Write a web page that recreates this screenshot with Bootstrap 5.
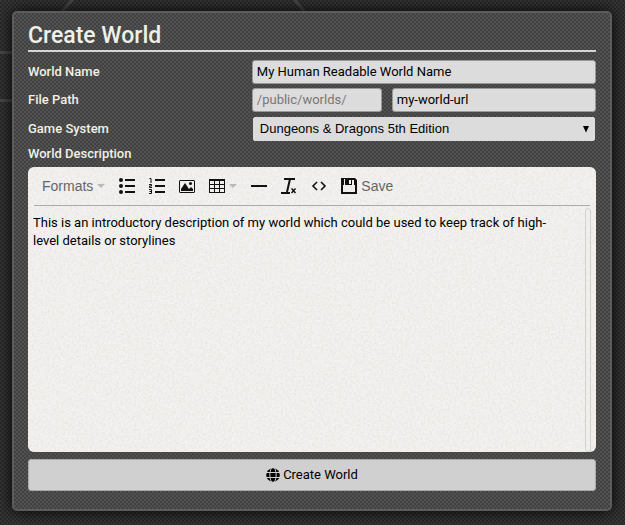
<!DOCTYPE html>
<html lang="en">
<head>
<meta charset="utf-8">
<meta name="viewport" content="width=device-width, initial-scale=1">
<title>Create World</title>
<link href="https://cdn.jsdelivr.net/npm/bootstrap@5.3.0/dist/css/bootstrap.min.css" rel="stylesheet">
<style>
  body {
    font-family: Roboto, "Open Sans", sans-serif;
    font-size: 13px;
    line-height: 18px;
    color: #000;
    background: #303030;
    padding: 11px 13px 14px 12px;
  }
  .weave {
    background-image: repeating-conic-gradient(rgba(0,0,0,.15) 0 25%, rgba(255,255,255,.03) 0 50%);
    background-size: 4px 4px;
  }
  .backdrop-lines { z-index: -1; }
  .panel {
    background-color: #4c4c4c;
    border: 2px solid #5c5c5c;
    border-radius: 5px;
    padding: 8px 14px 18px;
    box-shadow: 0 0 16px #000;
  }
  .panel-title {
    font-size: 23px;
    line-height: 29px;
    font-weight: 500;
    color: #f0f0e8;
    border-bottom: 2px solid #d4d4d2;
    margin-bottom: 8px;
  }
  .fields { display: grid; row-gap: 4px; }
  .field-label { color: #f0f0e8; font-weight: 500; }
  .field {
    height: 24px;
    padding: 0 4px 2px;
    font-size: 13px;
    color: #000;
    background-color: #dcdcdc;
    border: 1px solid #999;
    border-radius: 3px;
    min-width: 0;
  }
  .field:disabled { color: #777; opacity: 1; }
  .field-path { flex: 0 0 130px; }
  .system { margin: 1px 1px 0; }
  .field-select {
    appearance: none;
    font-family: "Liberation Sans", Arial, sans-serif;
    padding: 0 6px;
    border-color: #dcdcdc;
    border-radius: 2px;
  }
  .arrow { right: 5px; top: 9px; pointer-events: none; }
  .editor {
    height: 285px;
    background: #f3f2f0;
    border-radius: 6px;
    padding: 0 5px;
  }
  .tools {
    height: 39px;
    margin: 0 1px;
    padding: 0 8px;
    gap: 14px;
    border-bottom: 1px solid #aaa;
  }
  .tool {
    font: 14px/18px "Liberation Sans", Arial, sans-serif;
    color: #666;
    gap: 4px;
    padding: 0;
    border: 0;
    background: none;
  }
  .tool svg { display: block; color: #111; }
  .tool .caret { color: #b9b9b9; }
  .note {
    resize: none;
    border: 0;
    padding: 8px 20px 0 0;
    background: transparent;
    color: #000;
    outline-offset: -1px;
  }
  .track {
    width: 6px;
    margin-top: 2px;
    border: 1px solid #d2d1ce;
    border-radius: 3px;
  }
  .submit {
    height: 32px;
    margin-top: 7px;
    gap: 3px;
    font-size: 13px;
    color: #000;
    background-color: #d0d0d0;
    border: 1px solid #aaa;
    border-radius: 3px;
  }
</style>
<script src="https://cdn.jsdelivr.net/npm/bootstrap@5.3.0/dist/js/bootstrap.bundle.min.js"></script>
</head>
<body class="weave position-relative min-vh-100">
<svg class="backdrop-lines position-absolute top-0 start-0" width="400" height="110" fill="none" stroke="#484848" stroke-width="3" aria-hidden="true">
  <path d="M0 52.500H12M0 100.500H12M74 -2 62 12M292 -4 306 14"/>
</svg>
<form class="panel weave position-relative">
  <h1 class="panel-title">Create World</h1>
  <div class="fields">
    <div class="row g-0 align-items-center">
      <label class="field-label col" for="world-name">World Name</label>
      <div class="d-flex" style="width:60.6%"><input class="field w-100" id="world-name" type="text" value="My Human Readable World Name"></div>
    </div>
    <div class="row g-0 align-items-center">
      <label class="field-label col" for="file-path">File Path</label>
      <div class="d-flex" style="width:60.6%;gap:10px">
        <input class="field field-path" type="text" value="/public/worlds/" aria-label="Base path" disabled>
        <input class="field flex-grow-1" id="file-path" type="text" value="my-world-url">
      </div>
    </div>
    <div class="row g-0 align-items-center">
      <label class="field-label col" for="game-system">Game System</label>
      <div style="width:60.6%">
        <div class="system position-relative d-flex">
          <select class="field field-select w-100" id="game-system"><option>Dungeons &amp; Dragons 5th Edition</option></select>
          <svg class="arrow position-absolute" width="8" height="7" aria-hidden="true"><path d="M1 0h6L4 6.500z"/></svg>
        </div>
      </div>
    </div>
    <label class="field-label" for="description">World Description</label>
  </div>
  <div class="editor position-relative d-flex flex-column overflow-hidden mt-1">
    <svg class="position-absolute top-0 start-0 w-100 h-100" aria-hidden="true">
      <filter id="paper"><feTurbulence type="fractalNoise" baseFrequency=".45" numOctaves="3" seed="4"/><feColorMatrix values="0 0 0 0 .7  0 0 0 0 .69  0 0 0 0 .65  .9 0 0 0 -.32"/></filter>
      <rect width="100%" height="100%" filter="url(#paper)"/>
    </svg>
    <div class="tools position-relative d-flex align-items-center" role="toolbar" aria-label="Formatting">
      <button class="tool d-flex align-items-center" type="button">Formats
        <svg class="caret" width="8" height="4"><path fill="currentColor" d="M0 0h8L4 4z"/></svg></button>
      <button class="tool" type="button" aria-label="Bullet list">
        <svg width="16" height="16" fill="currentColor"><circle cx="2" cy="2" r="2"/><circle cx="2" cy="8" r="2"/><circle cx="2" cy="14" r="2"/><path d="M6 1h10v2H6zM6 7h10v2H6zM6 13h10v2H6z"/></svg></button>
      <button class="tool" type="button" aria-label="Numbered list">
        <svg width="16" height="16" fill="currentColor"><path d="M6 1h10v2H6zM6 7h10v2H6zM6 13h10v2H6z"/><path fill="none" stroke="currentColor" d="M.5.500H2V5M0 6.500h2.500v1.500h-2v1.500H3M0 11.500h2.500v4H0M.5 13.500h2"/></svg></button>
      <button class="tool" type="button" aria-label="Insert image">
        <svg width="16" height="16" fill="currentColor"><path fill-rule="evenodd" d="M1 2h14l1 1v11l-1 1H1l-1-1V3zM1 3v11h14V3z"/><path d="M2 13V11l4-6 4 6 2-2 2 2v2z"/><circle cx="11.500" cy="5.500" r="1.500"/></svg></button>
      <button class="tool d-flex align-items-center" type="button" aria-label="Table">
        <svg width="16" height="16" fill="currentColor"><path fill-rule="evenodd" d="M0 1h16v14H0zM1 3v3h4V3zM6 3v3h4V3zM11 3v3h4V3zM1 7v3h4V7zM6 7v3h4V7zM11 7v3h4V7zM1 11v3h4v-3zM6 11v3h4v-3zM11 11v3h4v-3z"/></svg>
        <svg class="caret" width="8" height="4"><path fill="currentColor" d="M0 0h8L4 4z"/></svg></button>
      <button class="tool" type="button" aria-label="Horizontal line">
        <svg width="16" height="16" fill="currentColor"><path d="M0 7h16v2H0z"/></svg></button>
      <button class="tool" type="button" aria-label="Clear formatting">
        <svg width="16" height="16" fill="none" stroke="currentColor"><path stroke-width="2" d="M3 1h11M9 1 6 14M0 15h9"/><path stroke-width="1.500" d="m10.500 10.500 4 4.500m0-4.500-4 4.500"/></svg></button>
      <button class="tool" type="button" aria-label="Source code">
        <svg width="16" height="16" fill="none" stroke="currentColor" stroke-width="1.600"><path d="M6 4 2 8l4 4M10 4l4 4-4 4"/></svg></button>
      <button class="tool d-flex align-items-center" type="button">
        <svg width="16" height="16" fill="currentColor"><path fill-rule="evenodd" d="M0 0h14l2 2v14H0zM2 7v7h12V7h-1V2h-2v5H4V1H3v6zM8 2v4h2V2z"/></svg>Save</button>
    </div>
    <div class="position-relative d-flex flex-grow-1">
      <textarea class="note flex-grow-1" id="description">This is an introductory description of my world which could be used to keep track of high-level details or storylines</textarea>
      <div class="track"></div>
    </div>
  </div>
  <button class="submit w-100 d-flex align-items-center justify-content-center" type="submit">
    <svg width="14" height="14" viewBox="0 0 14 14" aria-hidden="true"><circle cx="7" cy="7" r="6.800"/><path fill="none" stroke="#d0d0d0" d="M0 4.500h14M0 9.500h14M5.500 0C3.300 4 3.300 10 5.500 14M8.500 0c2.200 4 2.200 10 0 14"/></svg>
    Create World
  </button>
</form>
</body>
</html>
